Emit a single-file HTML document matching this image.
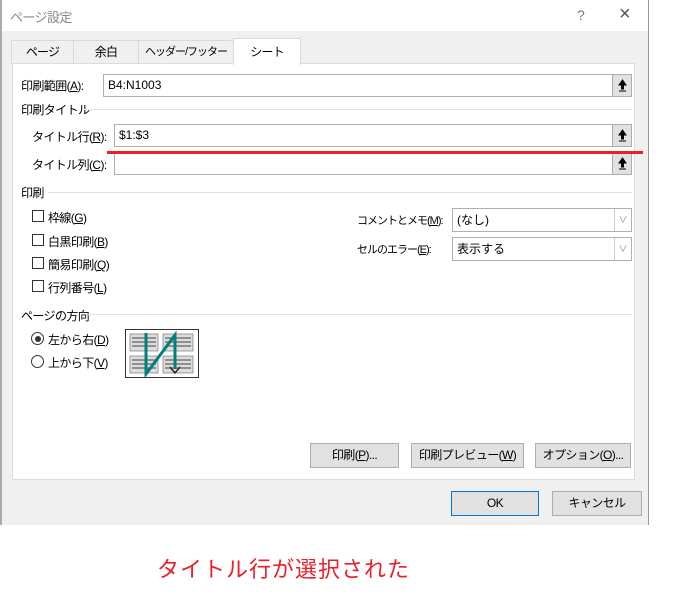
<!DOCTYPE html>
<html><head><meta charset="utf-8"><style>
*{margin:0;padding:0;box-sizing:border-box}
body{width:687px;height:614px;background:#fff;position:relative;overflow:hidden;font-family:"Liberation Sans","Noto Sans CJK JP",sans-serif;font-size:12px;color:#000}
.a{position:absolute;white-space:nowrap;letter-spacing:-0.6px}
.dlg{position:absolute;left:2px;top:0;width:647px;height:525px;background:#f0f0f0;border-right:1px solid #999}
.title{position:absolute;left:0;top:0;width:646px;height:31px;background:#fff}
.panel{position:absolute;left:10px;top:63px;width:623px;height:417px;background:#fff;border:1px solid #dcdcdc}
.tab{position:absolute;top:40px;height:24px;border:1px solid #d9d9d9;border-bottom:none;background:#f0f0f0;text-align:center;line-height:23px;font-size:12px;letter-spacing:-0.8px;white-space:nowrap}
.inp{position:absolute;height:23px;border:1px solid #b0b0b0;background:#fff;padding-left:4px;line-height:21px}
.up{position:absolute;width:20px;height:23px;background:#e1e1e1;border:1px solid #adadad;font-size:11px;text-align:center;line-height:21px}
.up svg{position:absolute;left:5px;top:4px}
.line{position:absolute;height:1px;background:#e3e3e3}
.cb{position:absolute;width:12px;height:12px;border:1px solid #333;background:#fff}
.btn{position:absolute;height:25px;border:1px solid #adadad;background:#e1e1e1;text-align:center;line-height:23px;letter-spacing:-0.6px;white-space:nowrap}
.sel{position:absolute;height:24px;border:1px solid #b0b0b0;background:#fff;padding-left:4px;line-height:22px}
.dd{position:absolute;right:0;top:0;width:17px;height:22px;border-left:1px solid #ccc;background:#fff;color:#888;font-size:9px;text-align:center;line-height:22px}
u{text-decoration:underline}
</style></head><body>
<div class="a" style="left:0;top:0;width:2px;height:525px;background:#aaa"></div>
<div class="dlg">
 <div class="title"></div>
 <div class="a" style="left:8px;top:7px;color:#888;font-size:13px">ページ設定</div>
 <div class="a" style="left:575px;top:7px;color:#777;font-size:14px">?</div>
 <div class="a" style="left:617px;top:3px;color:#555;font-size:20px;font-weight:300">×</div>
 <div class="tab" style="left:9px;width:63px">ページ</div>
 <div class="tab" style="left:71px;width:66px">余白</div>
 <div class="tab" style="left:136px;width:96px;font-size:11px;letter-spacing:-1px">ヘッダー/フッター</div>
 <div class="panel"></div>
 <div class="tab" style="left:231px;width:68px;top:38px;height:27px;background:#fff;line-height:27px">シート</div>
</div>
<div class="a" style="left:21px;top:77px">印刷範囲(<u>A</u>):</div>
<div class="inp" style="left:103px;top:74px;width:510px">B4:N1003</div>
<div class="up" style="left:612px;top:74px"><svg width="9" height="14" viewBox="0 0 9 14"><path d="M4.5 1L1 6h2.5v4h2V6H8z M1 12h7" fill="#000" stroke="#000" stroke-width="1"/></svg></div>
<div class="a" style="left:21px;top:101px">印刷タイトル</div>
<div class="line" style="left:84px;top:109px;width:548px"></div>
<div class="a" style="left:32px;top:128px">タイトル行(<u>R</u>):</div>
<div class="inp" style="left:114px;top:124px;width:499px">$1:$3</div>
<div class="up" style="left:612px;top:124px"><svg width="9" height="14" viewBox="0 0 9 14"><path d="M4.5 1L1 6h2.5v4h2V6H8z M1 12h7" fill="#000" stroke="#000" stroke-width="1"/></svg></div>
<div class="a" style="left:32px;top:156px">タイトル列(<u>C</u>):</div>
<div class="inp" style="left:114px;top:152px;width:499px;height:23px"></div>
<div class="up" style="left:612px;top:152px"><svg width="9" height="14" viewBox="0 0 9 14"><path d="M4.5 1L1 6h2.5v4h2V6H8z M1 12h7" fill="#000" stroke="#000" stroke-width="1"/></svg></div>
<div class="a" style="left:107px;top:151px;width:536px;height:3px;background:#e8202a"></div>
<div class="a" style="left:21px;top:184px">印刷</div>
<div class="line" style="left:48px;top:192px;width:584px"></div>
<div class="cb" style="left:32px;top:210px"></div><div class="a" style="left:48px;top:209px">枠線(<u>G</u>)</div>
<div class="cb" style="left:32px;top:234px"></div><div class="a" style="left:48px;top:233px">白黒印刷(<u>B</u>)</div>
<div class="cb" style="left:32px;top:257px"></div><div class="a" style="left:48px;top:256px">簡易印刷(<u>Q</u>)</div>
<div class="cb" style="left:32px;top:280px"></div><div class="a" style="left:48px;top:279px">行列番号(<u>L</u>)</div>
<div class="a" style="left:357px;top:212px;font-size:11px;letter-spacing:-1px">コメントとメモ(<u>M</u>):</div>
<div class="sel" style="left:452px;top:208px;width:180px">(なし)<div class="dd">&#8744;</div></div>
<div class="a" style="left:357px;top:241px;font-size:11px;letter-spacing:-1px">セルのエラー(<u>E</u>):</div>
<div class="sel" style="left:452px;top:237px;width:180px">表示する<div class="dd">&#8744;</div></div>
<div class="a" style="left:21px;top:307px">ページの方向</div>
<div class="line" style="left:88px;top:314px;width:544px"></div>
<div class="a" style="left:31px;top:332px;width:13px;height:13px;border:1px solid #333;border-radius:50%;background:#fff"><div style="position:absolute;left:2.5px;top:2.5px;width:6px;height:6px;border-radius:50%;background:#333"></div></div>
<div class="a" style="left:48px;top:331px">左から右(<u>D</u>)</div>
<div class="a" style="left:31px;top:355px;width:13px;height:13px;border:1px solid #333;border-radius:50%;background:#fff"></div>
<div class="a" style="left:48px;top:354px">上から下(<u>V</u>)</div>
<svg class="a" style="left:125px;top:329px" width="74" height="49" viewBox="0 0 74 49">
<rect x="0.5" y="0.5" width="73" height="48" fill="#fff" stroke="#333"/>
<rect x="5" y="5" width="28" height="17" fill="#ddd" stroke="#666" stroke-width="0.6"/>
<rect x="38" y="5" width="30" height="17" fill="#ddd" stroke="#666" stroke-width="0.6"/>
<rect x="5" y="27" width="28" height="17" fill="#ddd" stroke="#666" stroke-width="0.6"/>
<rect x="38" y="27" width="30" height="17" fill="#ddd" stroke="#666" stroke-width="0.6"/>
<g stroke="#444" stroke-width="1">
<path d="M7 9h24M7 13h24M7 17h24M40 9h26M40 13h26M40 17h26M7 31h24M7 35h24M7 39h24M40 31h26M40 35h26M40 39h26"/>
</g>
<path d="M21 4V45L50 6V40" fill="none" stroke="#00807d" stroke-width="3"/>
<path d="M45 38l5 6 5-6" fill="none" stroke="#222" stroke-width="1.5"/>
</svg>
<div class="btn" style="left:310px;top:443px;width:89px">印刷(<u>P</u>)...</div>
<div class="btn" style="left:411px;top:443px;width:113px">印刷プレビュー(<u>W</u>)</div>
<div class="btn" style="left:535px;top:443px;width:96px">オプション(<u>O</u>)...</div>
<div class="btn" style="left:451px;top:491px;width:88px;border:1px solid #0078d7">OK</div>
<div class="btn" style="left:552px;top:491px;width:90px">キャンセル</div>
<div class="a" style="left:157px;top:552px;font-size:22px;color:#e8202a;letter-spacing:1px">タイトル行が選択された</div>
</body></html>
